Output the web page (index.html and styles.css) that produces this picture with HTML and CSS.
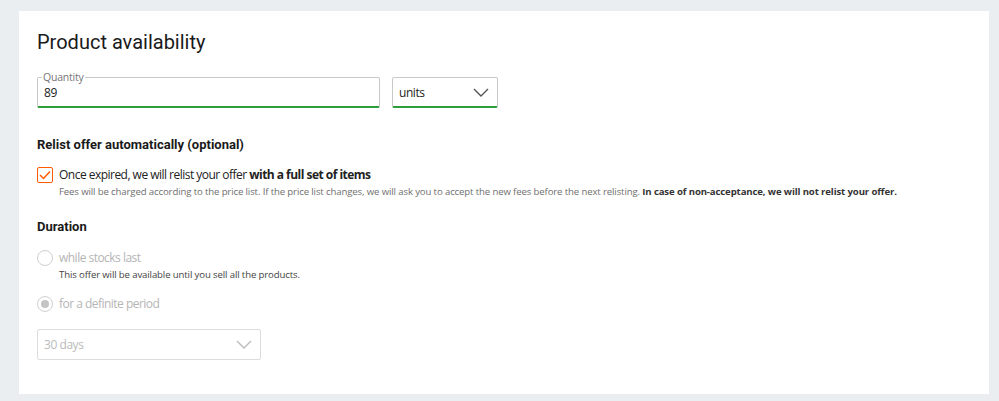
FILE: index.html
```html
<!DOCTYPE html>
<html lang="en">
<head>
<meta charset="utf-8">
<title>Product availability</title>
<link rel="stylesheet" href="styles.css">
</head>
<body>
<div class="card">
  <h1 class="title">Product availability</h1>
  <div class="qty-row">
    <div class="field qty">
      <span class="field-label">Quantity</span>
      <span class="field-value">89</span>
    </div>
    <div class="select units">
      <span class="select-value">units</span>
      <svg class="chev" width="16" height="9" viewBox="0 0 16 9"><path d="M1 1 L8 8 L15 1" fill="none" stroke="#555" stroke-width="1.4"/></svg>
    </div>
  </div>

  <h2 class="section">Relist offer automatically (optional)</h2>
  <div class="option">
    <span class="checkbox">
      <svg width="12" height="10" viewBox="0 0 12 10"><path d="M1 5 L4.5 8.5 L11 1.5" fill="none" stroke="#ff5a00" stroke-width="1.5"/></svg>
    </span>
    <div class="option-body">
      <div class="option-text">Once expired, we will relist your offer <b>with a full set of items</b></div>
      <div class="option-note">Fees will be charged according to the price list. If the price list changes, we will ask you to accept the new fees before the next relisting. <b>In case of non-acceptance, we will not relist your offer.</b></div>
    </div>
  </div>

  <h2 class="section duration">Duration</h2>
  <div class="option radio-opt">
    <span class="radio"></span>
    <div class="option-body">
      <div class="option-text muted">while stocks last</div>
      <div class="option-note dark">This offer will be available until you sell all the products.</div>
    </div>
  </div>
  <div class="option radio-opt second">
    <span class="radio checked"></span>
    <div class="option-body">
      <div class="option-text muted">for a definite period</div>
    </div>
  </div>
  <div class="select days">
    <span class="select-value">30 days</span>
    <svg class="chev" width="16" height="9" viewBox="0 0 16 9"><path d="M1 1 L8 8 L15 1" fill="none" stroke="#bbb" stroke-width="1.4"/></svg>
  </div>
</div>
</body>
</html>
```

FILE: styles.css
```css
html, body {
  margin: 0;
  padding: 0;
}
body {
  background: #eaeef1;
  font-family: "Open Sans", "Liberation Sans", sans-serif;
  color: #222;
}
.card {
  background: #fff;
  margin: 11px 10px 0 19px;
  height: 383px;
  box-sizing: border-box;
  padding: 19px 18px 0 18px;
}
.title {
  font-family: Roboto, "Liberation Sans", sans-serif;
  font-weight: 400;
  font-size: 20px;
  line-height: 24px;
  margin: 0;
  color: #1a1a1a;
}
.qty-row {
  display: flex;
  gap: 12px;
  margin-top: 23px;
}
.field {
  position: relative;
  box-sizing: border-box;
  height: 31px;
  border: 1px solid #c9c9c9;
  border-bottom: 2px solid #2e9e3b;
  border-radius: 2px;
  padding: 0 6px;
  display: flex;
  align-items: center;
}
.qty {
  width: 343px;
}
.field-label {
  position: absolute;
  top: -8px;
  left: 4px;
  background: #fff;
  padding: 0 1px;
  font-size: 10.5px;
  letter-spacing: -0.2px;
  line-height: 14px;
  color: #767676;
}
.field-value {
  font-size: 12px;
  letter-spacing: -0.3px;
  color: #222;
  margin-top: 1px;
}
.select {
  display: flex;
  align-items: center;
  justify-content: space-between;
  box-sizing: border-box;
  height: 31px;
  border: 1px solid #c9c9c9;
  border-radius: 2px;
  padding: 0 8px 0 6px;
}
.units {
  width: 106px;
  border-bottom: 2px solid #2e9e3b;
}
.select-value {
  font-size: 12px;
  letter-spacing: -0.45px;
  color: #222;
}
.section {
  font-family: Roboto, "Liberation Sans", sans-serif;
  font-weight: 700;
  font-size: 13px;
  line-height: 18px;
  margin: 28px 0 0 0;
  color: #1a1a1a;
}
.option {
  display: flex;
  gap: 6px;
  margin-top: 13px;
}
.checkbox {
  width: 16px;
  height: 16px;
  box-sizing: border-box;
  border: 1.5px solid #ff5a00;
  border-radius: 2px;
  display: flex;
  align-items: center;
  justify-content: center;
  flex: none;
}
.option-text {
  font-size: 12px;
  letter-spacing: -0.52px;
  line-height: 16px;
  color: #222;
}
.option-text b {
  font-weight: 700;
}
.option-note {
  font-size: 9.6px;
  letter-spacing: -0.125px;
  line-height: 14px;
  color: #6f6f6f;
  margin-top: 2px;
}
.option-note b {
  color: #333;
}
.option-note.dark {
  color: #444;
}
.duration {
  margin-top: 19px;
}
.radio-opt {
  margin-top: 14px;
}
.radio {
  width: 16px;
  height: 16px;
  box-sizing: border-box;
  border: 1px solid #d0d0d0;
  border-radius: 50%;
  flex: none;
  display: flex;
  align-items: center;
  justify-content: center;
}
.radio.checked::after {
  content: "";
  width: 8px;
  height: 8px;
  border-radius: 50%;
  background: #c4c4c4;
}
.muted {
  color: #b5b5b5;
}
.second {
  margin-top: 14px;
}
.days {
  width: 224px;
  height: 31px;
  margin-top: 17px;
  border-color: #dcdcdc;
}
.days .select-value {
  color: #bbb;
}
```
